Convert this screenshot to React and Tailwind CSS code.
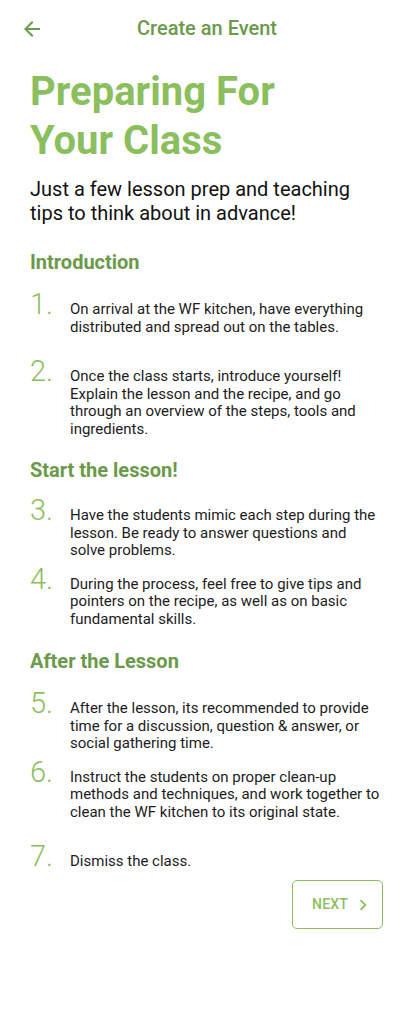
const sections = [
  {
    title: 'Introduction',
    mt: 'mt-[25px]',
    items: [
      { n: 1, mt: 'mt-[14px]', text: 'On arrival at the WF kitchen, have everything distributed and spread out on the tables.' },
      { n: 2, mt: 'mt-[19px]', text: 'Once the class starts, introduce yourself! Explain the lesson and the recipe, and go through an overview of the steps, tools and ingredients.' },
    ],
  },
  {
    title: 'Start the lesson!',
    mt: 'mt-[20px]',
    items: [
      { n: 3, mt: 'mt-[12px]', text: 'Have the students mimic each step during the lesson. Be ready to answer questions and solve problems.' },
      { n: 4, mt: 'mt-[3px]', text: 'During the process, feel free to give tips and pointers on the recipe, as well as on basic fundamental skills.' },
    ],
  },
  {
    title: 'After the Lesson',
    mt: 'mt-[21px]',
    items: [
      { n: 5, mt: 'mt-[14px]', text: 'After the lesson, its recommended to provide time for a discussion, question & answer, or social gathering time.' },
      { n: 6, mt: 'mt-[3px]', text: 'Instruct the students on proper clean-up methods and techniques, and work together to clean the WF kitchen to its original state.' },
      { n: 7, mt: 'mt-[19px]', text: 'Dismiss the class.' },
    ],
  },
];

function Step({ n, text, mt }) {
  return (
    <div className={`flex items-baseline ${mt}`}>
      <span className="w-[40px] shrink-0 text-[29px] leading-[33px] font-light text-[#8bbf5e]">
        {n}.
      </span>
      <p className="flex-1 text-[15px] leading-[17.5px] text-[#1c1c1c]">{text}</p>
    </div>
  );
}

export default function App() {
  return (
    <div className="w-[414px] min-h-[1028px] bg-white font-['Roboto',sans-serif]">
      <header className="grid h-[56px] pt-px grid-cols-[1fr_auto_1fr] items-center">
        <button className="flex h-6 w-6 ml-5 items-center justify-center">
          <svg width="24" height="24" viewBox="0 0 24 24" fill="#6a9a4a">
            <path d="M20 11H7.83l5.59-5.59L12 4l-8 8 8 8 1.41-1.41L7.83 13H20v-2z" />
          </svg>
        </button>
        <h1 className="text-[20px] leading-[23.5px] font-medium text-[#6a9a4a]">Create an Event</h1>
        <div />
      </header>

      <main className="flex flex-col px-[30px] pb-10">
        <h2 className="mt-[11px] text-[40px] leading-[49px] font-bold text-[#8bbf5e]">
          Preparing For
          <br />
          Your Class
        </h2>
        <p className="mt-[13px] text-[20px] leading-[23.5px] text-[#111]">
          Just a few lesson prep and teaching tips to think about in advance!
        </p>

        {sections.map((s) => (
          <section key={s.title} className={s.mt}>
            <h3 className="text-[20px] leading-[24px] font-bold text-[#6a9a4a]">{s.title}</h3>
            {s.items.map((it) => (
              <Step key={it.n} {...it} />
            ))}
          </section>
        ))}

        <button className="mt-[7px] mr-px flex h-[49px] w-[91px] items-center self-end rounded-[5px] border border-[#8bbf5e] pl-[19px]">
          <span className="text-[14px] font-medium tracking-[0.2px] text-[#8bbf5e]">NEXT</span>
          <svg width="22" height="22" viewBox="0 0 24 24" fill="#8bbf5e" className="ml-[4px]">
            <path d="M10 6L8.59 7.41 13.17 12l-4.58 4.59L10 18l6-6z" />
          </svg>
        </button>
      </main>
    </div>
  );
}
